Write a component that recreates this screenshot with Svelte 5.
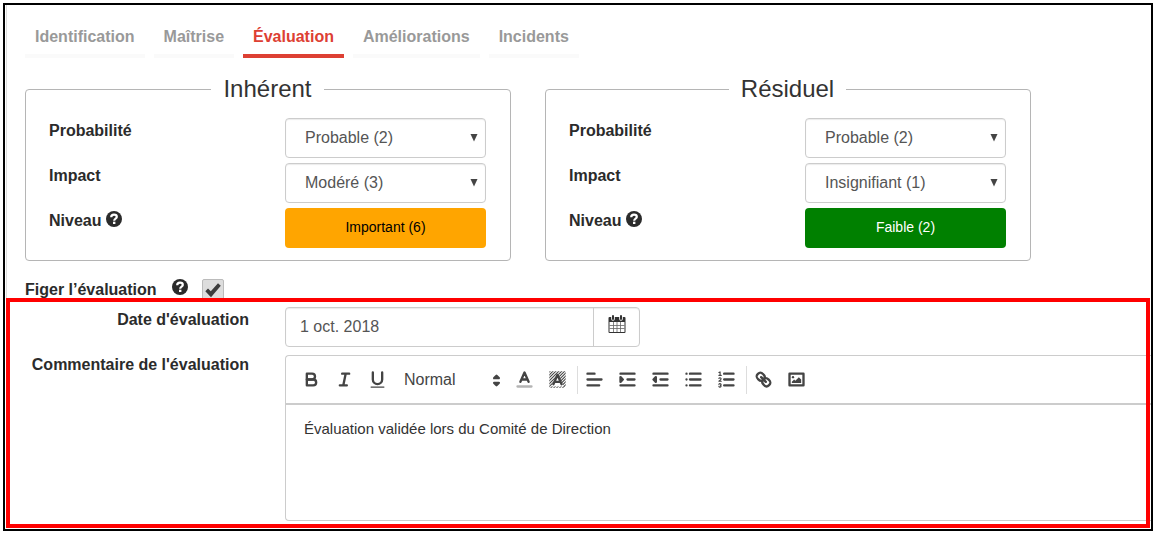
<script>
  const tabs = ['Identification', 'Maîtrise', 'Évaluation', 'Améliorations', 'Incidents'];
  let active = $state('Évaluation');
  let frozen = $state(true);
  let date = $state('1 oct. 2018');
  let comment = $state('Évaluation validée lors du Comité de Direction');

  const probabilities = ['Rare (1)', 'Probable (2)', 'Fréquent (3)'];
  const impacts = ['Insignifiant (1)', 'Mineur (2)', 'Modéré (3)', 'Majeur (4)'];
  const panels = [
    { id: 'inh', title: 'Inhérent', probability: 'Probable (2)', impact: 'Modéré (3)', level: 'Important (6)', tone: 'orange' },
    { id: 'res', title: 'Résiduel', probability: 'Probable (2)', impact: 'Insignifiant (1)', level: 'Faible (2)', tone: 'green' }
  ];
  const hatch = Array.from({ length: 11 }, (_, i) => 4.5 + i * 2.5);
</script>

{#snippet help()}
  <svg class="help" viewBox="0 0 16 16" aria-hidden="true">
    <circle cx="8" cy="8" r="8" fill="#2b2b2b" />
    <path d="M5.2 6.3C5.2 4.500 6.400 3.700 8 3.700c1.700 0 2.800.8 2.800 2.200C10.800 7.700 8.200 7.500 8.200 9.700" fill="none" stroke="#fff" stroke-width="2.200" />
    <rect x="7" y="10.700" width="2.400" height="2.300" fill="#fff" />
  </svg>
{/snippet}

{#snippet choice(id, options, value)}
  <span class="choice">
    <select {id} {value}>
      {#each options as option}<option>{option}</option>{/each}
    </select>
    <svg viewBox="0 0 8 8" aria-hidden="true"><path d="M0.500 0H7.500L4 7.500Z" fill="#444" /></svg>
  </span>
{/snippet}

<main>
  <div class="top">
    <nav>
      {#each tabs as tab}
        <button class:active={active === tab} onclick={() => (active = tab)}>{tab}</button>
      {/each}
    </nav>

    <div class="panels">
      {#each panels as p}
        <fieldset>
          <legend>{p.title}</legend>
          <div class="rows">
            <label for="{p.id}-prob">Probabilité</label>
            {@render choice(p.id + '-prob', probabilities, p.probability)}
            <label for="{p.id}-imp">Impact</label>
            {@render choice(p.id + '-imp', impacts, p.impact)}
            <label for="{p.id}-level">Niveau {@render help()}</label>
            <output id="{p.id}-level" class={p.tone}>{p.level}</output>
          </div>
        </fieldset>
      {/each}
    </div>

    <div class="freeze">
      <label for="freeze">Figer l’évaluation</label>
      {@render help()}
      <span class="check">
        <input id="freeze" type="checkbox" bind:checked={frozen} />
        {#if frozen}
          <svg viewBox="0 0 16 16" aria-hidden="true"><path d="M0.300 9.200L3 6.500L5.800 9.200L13 1.300L15.800 3.800L6 15.200Z" fill="#3c3c3c" /></svg>
        {/if}
      </span>
    </div>
  </div>

  <section>
    <label class="date-label" for="date">Date d'évaluation</label>
    <div class="date">
      <input id="date" type="text" bind:value={date} />
      <button aria-label="Calendrier">
        <svg viewBox="0 0 18 20" aria-hidden="true">
          <rect x="0.500" y="3" width="17" height="16" rx="1" fill="#333" />
          <path d="M1.500 8H16.500V18H1.500Z" fill="#fff" />
          <path d="M5.500 8V18M9 8V18M12.500 8V18M1.500 11.500H16.500M1.500 14.500H16.500" stroke="#666" stroke-width="0.800" />
          <path d="M5 2V5M13 2V5" stroke="#fff" stroke-width="3.600" stroke-linecap="round" />
          <path d="M5 2V5M13 2V5" stroke="#333" stroke-width="2" stroke-linecap="round" />
        </svg>
      </button>
    </div>

    <label for="comment">Commentaire de l'évaluation</label>
    <div class="editor">
      <div class="toolbar">
        <div class="group">
          <button aria-label="Gras">
            <svg viewBox="0 0 18 18"><path d="M5,4H9.500A2.500,2.500,0,0,1,9.500,9H5Z" /><path d="M5,9H10.500A2.500,2.500,0,0,1,10.500,14H5Z" /></svg>
          </button>
          <button aria-label="Italique">
            <svg viewBox="0 0 18 18"><path d="M7,4H13M5,14H11M8,14L10,4" /></svg>
          </button>
          <button aria-label="Souligné">
            <svg viewBox="0 0 18 18"><path d="M5,3V9a4.012,4.012,0,0,0,4,4H9a4.012,4.012,0,0,0,4-4V3" /><rect class="fill" x="3" y="15" width="12" height="1" rx="0.500" /></svg>
          </button>
          <span class="style">
            <select aria-label="Style">
              <option>Normal</option>
              <option>Titre</option>
            </select>
            <svg viewBox="0 0 18 18" aria-hidden="true"><path class="both" d="M7 11L9 13L11 11ZM7 7L9 5L11 7Z" /></svg>
          </span>
          <button aria-label="Couleur du texte">
            <svg viewBox="0 0 18 18"><path class="faint" d="M3,15H15" /><path d="M5.500 11L9 3L12.500 11M11.630 9H6.380" /></svg>
          </button>
          <button aria-label="Couleur de fond">
            <svg viewBox="0 0 18 18">
              <clipPath id="hatch-box"><path clip-rule="evenodd" d="M2 2H16V16H2ZM9 3.200L3.800 15H14.200Z" /></clipPath>
              <g clip-path="url(#hatch-box)">
                {#each hatch as h}<path class="hatch" d="M0 {h}L{h} 0" />{/each}
              </g>
              <path d="M5.500 13L9 5L12.500 13M11.630 11H6.380" />
            </svg>
          </button>
        </div>
        <div class="group">
          <button aria-label="Alignement">
            <svg viewBox="0 0 18 18"><path d="M3,9H15M3,14H13M3,4H9" /></svg>
          </button>
          <button aria-label="Augmenter le retrait">
            <svg viewBox="0 0 18 18"><path d="M3,14H15M3,4H15M9,9H15" /><path class="both" d="M3 7V11L5 9Z" /></svg>
          </button>
          <button aria-label="Diminuer le retrait">
            <svg viewBox="0 0 18 18"><path d="M3,14H15M3,4H15M9,9H15" /><path class="both" d="M5 7V11L3 9Z" /></svg>
          </button>
          <button aria-label="Liste à puces">
            <svg viewBox="0 0 18 18"><path d="M6,4H15M6,9H15M6,14H15M3,4H3.010M3,9H3.010M3,14H3.010" /></svg>
          </button>
          <button aria-label="Liste numérotée">
            <svg viewBox="0 0 18 18">
              <path d="M7,4H15M7,9H15M7,14H15" />
              <path class="thin" d="M2.500 5.500H4.500M2.500 3L3.500 2.500V5.500M4.500,10.500h-2c0-.234,1.850-1.076,1.850-2.234A0.959,0.959,0,0,0,2.500,8.156M2.500,14.846a0.959,0.959,0,0,0,1.850-.109A0.700,0.700,0,0,0,3.750,14a0.688,0.688,0,0,0,.6-0.736,0.959,0.959,0,0,0-1.850-.109" />
            </svg>
          </button>
        </div>
        <div class="group">
          <button aria-label="Lien">
            <svg viewBox="0 0 18 18"><path d="M7,7L11,11" /><path d="M8.900,4.577a3.476,3.476,0,0,1,.36,4.679A3.476,3.476,0,0,1,4.577,8.900C3.185,7.500,2.035,6.400,4.217,4.217S7.500,3.185,8.900,4.577Z" /><path d="M13.423,9.100a3.476,3.476,0,0,0-4.679-.36,3.476,3.476,0,0,0,.36,4.679c1.392,1.392,2.500,2.542,4.679.36S14.815,10.500,13.423,9.100Z" /></svg>
          </button>
          <button aria-label="Image">
            <svg viewBox="0 0 18 18"><rect x="3" y="4" width="12" height="10" /><circle class="fill" cx="6" cy="7" r="1" /><path class="fill" d="M5 12V11L7 9L8 10L11 7L13 9V12Z" /></svg>
          </button>
        </div>
      </div>
      <textarea id="comment" bind:value={comment}></textarea>
    </div>
  </section>
</main>

<style>
  :global(body) { background: #fff; }
  main, main * { box-sizing: border-box; }
  main {
    margin: 3px;
    padding: 0 0 1px 1px;
    border: 2px solid #000;
    overflow: hidden;
    font: 16px/24px "Liberation Sans", Arial, sans-serif;
    color: #333;
  }
  button, select, input, textarea { font: inherit; color: inherit; margin: 0; border: 0; background: none; padding: 0; }
  button, select { cursor: pointer; }
  select { appearance: none; }
  label { font-weight: bold; color: #2b2b2b; }
  .help { width: 16px; height: 16px; }
  label .help { vertical-align: -1px; }

  .top { border-left: 1px solid #ddd; padding: 16px 120px 0 18px; }
  nav { display: flex; gap: 9px; }
  nav button {
    padding: 4px 10px 5px;
    border-bottom: 4px solid #fafafa;
    font-weight: bold;
    color: #999;
  }
  nav button.active { color: #dd4033; border-color: #dd4033; }

  .panels { display: grid; grid-template-columns: repeat(2, minmax(0, 1fr)); gap: 34px; margin-top: 16px; }
  fieldset { margin: 0; min-width: 0; padding: 14px 24px 12px 23px; border: 1px solid #b5b5b5; border-radius: 4px; }
  legend { margin: 0 auto; padding: 0 12px; font-size: 24px; line-height: 30px; }
  .rows { display: grid; grid-template-columns: 1fr 201px; row-gap: 5px; align-items: start; }
  .rows label { padding-top: 1px; }
  .choice, .style { position: relative; display: flex; }
  .choice select {
    width: 100%;
    height: 40px;
    padding: 0 19px;
    border: 1px solid #ccc;
    border-radius: 4px;
    box-shadow: inset 0 1px 1px rgba(0, 0, 0, 0.08);
    color: #555;
  }
  .choice svg { position: absolute; right: 8px; top: 16px; width: 8px; height: 8px; pointer-events: none; }
  output { height: 40px; border-radius: 4px; text-align: center; font-size: 14px; line-height: 38px; }
  .orange { background: #ffa500; color: #000; }
  .green { background: #008000; color: #fff; }

  .freeze { display: flex; align-items: flex-start; height: 20px; margin-top: 17px; }
  .freeze > .help { margin: 1px 14px 0 15px; }
  .check { position: relative; }
  .check input {
    appearance: none;
    display: block;
    width: 22px;
    height: 22px;
    margin-top: 1px;
    border: 1px solid #bbb;
    border-radius: 2px;
    background: #ddd;
  }
  .check svg { position: absolute; left: 3px; top: 4px; width: 16px; height: 16px; pointer-events: none; }

  section {
    position: relative;
    display: grid;
    grid-template-columns: 243px 1fr;
    column-gap: 36px;
    row-gap: 8px;
    padding: 9px 0 7px;
  }
  section::after { content: ""; position: absolute; inset: 0 1px 0 0; border: 4px solid #f00; pointer-events: none; }
  section > label { text-align: right; line-height: 20px; }
  .date-label { padding-top: 3px; }
  .date { display: flex; width: 355px; height: 40px; border: 1px solid #ccc; border-radius: 4px; box-shadow: inset 0 1px 1px rgba(0, 0, 0, 0.08); }
  .date input { flex: 1; min-width: 0; padding: 0 14px; color: #555; }
  .date button { width: 46px; border-left: 1px solid #ccc; padding-bottom: 6px; }
  .date svg { display: block; width: 18px; height: 20px; margin: 0 auto; }

  .editor { border: 1px solid #ccc; border-right: 0; border-radius: 4px 0 0 4px; min-width: 0; }
  .toolbar { display: flex; align-items: center; height: 49px; padding-left: 9px; border-bottom: 2px solid #ccc; }
  .group { display: flex; height: 28px; }
  .group + .group { margin-left: 3px; border-left: 1px solid #ddd; }
  .group button { width: 33px; }
  .group svg { display: block; width: 21px; height: 21px; margin: 0 auto; fill: none; stroke: #444; stroke-width: 2; stroke-linecap: round; stroke-linejoin: round; }
  .group .fill { fill: #444; stroke: none; }
  .group .both { fill: #444; }
  .group .thin { stroke-width: 1; }
  .group .hatch { stroke-width: 0.9; }
  .group .faint { opacity: 0.4; }
  .style select { width: 114px; padding-left: 10px; color: #444; }
  .group .style svg { position: absolute; right: 1px; top: 4px; }
  textarea { display: block; width: 100%; height: 115px; padding: 13px 18px; border: 0; resize: none; font-size: 15px; line-height: 22px; outline: 0; }
</style>
